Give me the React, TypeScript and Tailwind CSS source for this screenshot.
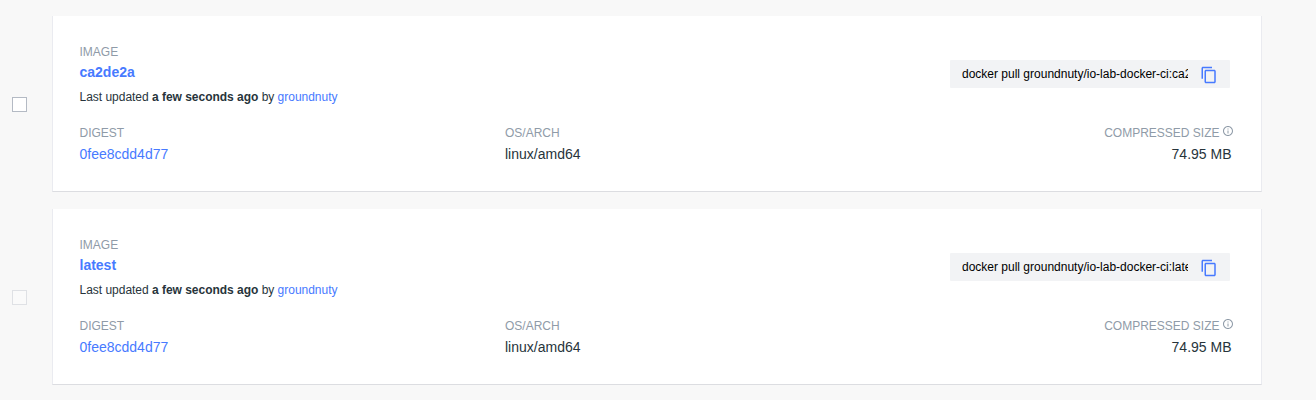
type Tag = {
  name: string;
  digest: string;
  arch: string;
  size: string;
  command: string;
  disabled: boolean;
};

const tags: Tag[] = [
  {
    name: 'ca2de2a',
    digest: '0fee8cdd4d77',
    arch: 'linux/amd64',
    size: '74.95 MB',
    command: 'docker pull groundnuty/io-lab-docker-ci:ca2de2a',
    disabled: false,
  },
  {
    name: 'latest',
    digest: '0fee8cdd4d77',
    arch: 'linux/amd64',
    size: '74.95 MB',
    command: 'docker pull groundnuty/io-lab-docker-ci:latest',
    disabled: true,
  },
];

function CopyIcon() {
  return (
    <svg viewBox="0 0 24 24" className="size-[18px]" fill="#477aff" aria-hidden="true">
      <path d="M16 1H4c-1.1 0-2 .9-2 2v14h2V3h12V1zm3 4H8c-1.1 0-2 .9-2 2v14c0 1.1.9 2 2 2h11c1.1 0 2-.9 2-2V7c0-1.1-.9-2-2-2zm0 16H8V7h11v14z" />
    </svg>
  );
}

function InfoIcon() {
  return (
    <svg viewBox="0 0 24 24" className="size-3" fill="#8f9ba8" aria-hidden="true">
      <path d="M11 7h2v2h-2zm0 4h2v6h-2zm1-9C6.48 2 2 6.48 2 12s4.480 10 10 10 10-4.480 10-10S17.520 2 12 2zm0 18c-4.410 0-8-3.590-8-8s3.590-8 8-8 8 3.590 8 8-3.590 8-8 8z" />
    </svg>
  );
}

function Label({ children }: { children: string }) {
  return <div className="text-xs leading-[18px] text-[#8f9ba8]">{children}</div>;
}

function TagCard({ tag }: { tag: Tag }) {
  return (
    <div className="flex items-center">
      <div className="w-[52px] shrink-0 pl-3">
        <div
          role="checkbox"
          aria-checked="false"
          aria-label={tag.name}
          className={`size-[15px] border ${
            tag.disabled ? 'border-[#dfe1e5] bg-[#fafafa]' : 'border-[#b4bac4] bg-white'
          }`}
        />
      </div>
      <div className="h-[176px] w-[1210px] shrink-0 border-x border-b border-x-[#eaebf0] border-b-[#dcdde1] bg-white pt-[27px] pr-[29px] pl-[26.500px]">
        <div className="flex h-[81px] justify-between">
          <div>
            <Label>IMAGE</Label>
            <div className="mt-px text-sm leading-5 font-bold text-[#477aff]">{tag.name}</div>
            <div className="mt-[7px] text-xs leading-4 tracking-[-0.02px] text-[#27343b]">
              Last updated <b>a few seconds ago</b> by <span className="text-[#477aff]">groundnuty</span>
            </div>
          </div>
          <div className="mt-[17px] mr-0.5 flex h-7 w-[280px] items-center rounded-[1px] bg-[#f2f3f5] pl-3">
            <div className="w-[226px] overflow-hidden text-xs leading-4 whitespace-nowrap text-black">
              {tag.command}
            </div>
            <div className="mt-px ml-3">
              <CopyIcon />
            </div>
          </div>
        </div>
        <div className="flex">
          <div className="w-[425.500px]">
            <Label>DIGEST</Label>
            <div className="mt-0.5 text-sm leading-5 text-[#477aff]">{tag.digest}</div>
          </div>
          <div className="flex-1">
            <Label>OS/ARCH</Label>
            <div className="mt-0.5 text-sm leading-5 text-[#27343b]">{tag.arch}</div>
          </div>
          <div className="flex flex-col items-end">
            <div className="-mr-0.5 flex gap-[2.500px]">
              <Label>COMPRESSED SIZE</Label>
              <div className="pt-px">
                <InfoIcon />
              </div>
            </div>
            <div className="mt-0.5 mr-[0.500px] text-sm leading-5 text-[#27343b]">{tag.size}</div>
          </div>
        </div>
      </div>
    </div>
  );
}

export default function App() {
  return (
    <div className="flex h-[400px] w-[1316px] flex-col gap-[17px] overflow-hidden bg-[#f8f8f8] pt-4 font-['Liberation_Sans',Arial,sans-serif]">
      {tags.map((tag) => (
        <TagCard key={tag.name} tag={tag} />
      ))}
    </div>
  );
}
